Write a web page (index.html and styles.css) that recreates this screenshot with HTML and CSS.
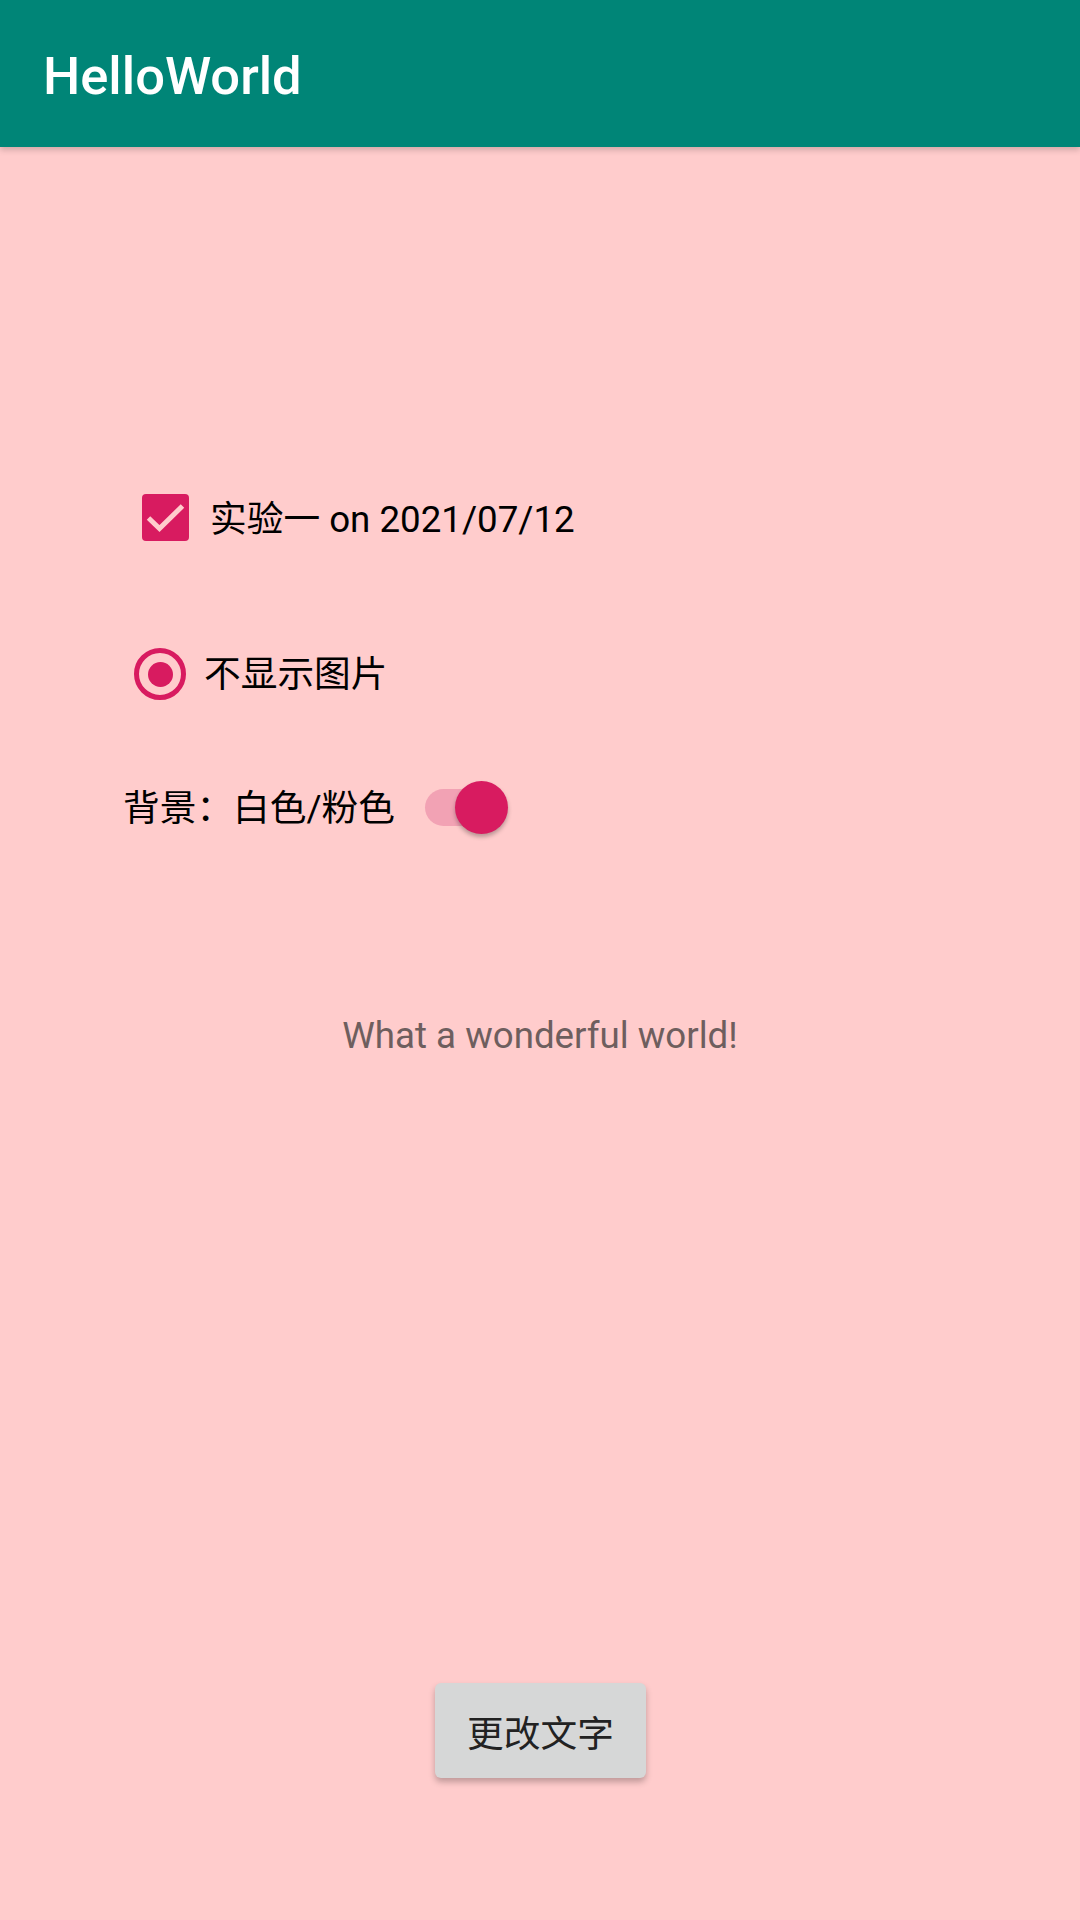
FILE: index.html
```html
<!DOCTYPE html>
<html lang="zh">
<head>
<meta charset="utf-8">
<title>HelloWorld</title>
<link rel="stylesheet" href="styles.css">
</head>
<body>
<div class="screen">
  <header class="appbar"><span class="title">HelloWorld</span></header>
  <main class="content">
    <div class="row row-check">
      <span class="checkbox">
        <svg width="47" height="47" viewBox="0 0 47 47"><path d="M6.5 24 L17.5 34.5 L40.5 12" fill="none" stroke="#FFCCCC" stroke-width="5" stroke-linecap="butt" stroke-linejoin="miter"/></svg>
      </span>
      <span class="label label-check">实验一 on 2021/07/12</span>
    </div>
    <div class="row row-radio">
      <span class="radio"><span class="radio-dot"></span></span>
      <span class="label label-radio">不显示图片</span>
    </div>
    <div class="row row-switch">
      <span class="label label-switch">背景：白色/粉色</span>
      <span class="switch"><span class="track"></span><span class="thumb"></span></span>
    </div>
    <p class="message">What a wonderful world!</p>
    <div class="btn-wrap"><button class="btn">更改文字</button></div>
  </main>
</div>
</body>
</html>
```
FILE: styles.css
```css
html, body {
  margin: 0;
  padding: 0;
}
body {
  width: 1080px;
  height: 1920px;
  background: #FFCCCC;
  font-family: Roboto, "Noto Sans CJK SC", sans-serif;
  overflow: hidden;
}
.screen {
  display: flex;
  flex-direction: column;
  height: 1920px;
}
.appbar {
  height: 147px;
  background: #008577;
  display: flex;
  align-items: center;
  padding: 5px 0 0 43px;
  box-sizing: border-box;
  box-shadow: 0 3px 6px rgba(0, 0, 0, 0.18);
  position: relative;
  z-index: 2;
}
.title {
  color: #FFFFFF;
  font-family: Roboto, sans-serif;
  font-weight: 500;
  font-size: 52.5px;
  line-height: 1;
}
.content {
  display: flex;
  flex-direction: column;
}
.row {
  display: flex;
  align-items: center;
  height: 60px;
}
.label {
  color: #000000;
  font-size: 36.7px;
  line-height: 1;
}
.row-check {
  margin-top: 340px;
  padding-left: 142px;
}
.checkbox {
  width: 47px;
  height: 47px;
  border-radius: 4px;
  background: #D81B60;
  display: flex;
}
.label-check {
  margin-left: 21px;
  padding-top: 7px;
}
.row-radio {
  margin-top: 97px;
  padding-left: 134px;
}
.radio {
  width: 52px;
  height: 52px;
  box-sizing: border-box;
  border: 5.5px solid #D81B60;
  border-radius: 50%;
  display: flex;
  align-items: center;
  justify-content: center;
}
.radio-dot {
  width: 25px;
  height: 25px;
  border-radius: 50%;
  background: #D81B60;
}
.label-radio {
  margin-left: 18px;
  padding-top: 2px;
}
.row-switch {
  margin-top: 73px;
  padding-left: 123px;
}
.label-switch {
  padding-top: 4px;
}
.switch {
  margin-left: 30px;
  width: 83px;
  height: 53px;
  position: relative;
}
.track {
  position: absolute;
  left: 0;
  top: 8px;
  width: 72px;
  height: 37px;
  border-radius: 19px;
  background: #F2A2B4;
}
.thumb {
  position: absolute;
  right: 0;
  top: 0;
  width: 53px;
  height: 53px;
  border-radius: 50%;
  background: #D81B60;
  box-shadow: 0 3px 4px rgba(0, 0, 0, 0.28);
}
.message {
  margin: 174px 0 0;
  text-align: center;
  font-size: 36.7px;
  line-height: 50px;
  color: #6E5E5E;
}
.btn-wrap {
  display: flex;
  justify-content: center;
  margin-top: 622px;
  padding-left: 1px;
}
.btn {
  width: 211px;
  height: 95px;
  border: none;
  border-radius: 6px;
  background: #D6D7D7;
  color: #222222;
  font-family: Roboto, "Noto Sans CJK SC", sans-serif;
  font-size: 36.7px;
  padding: 0;
  box-shadow: 0 4px 6px rgba(0, 0, 0, 0.25);
}
```
